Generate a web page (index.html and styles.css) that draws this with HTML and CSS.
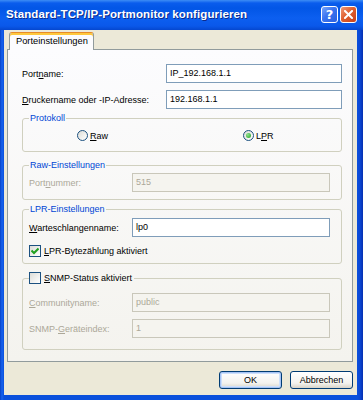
FILE: index.html
```html
<!DOCTYPE html>
<html lang="de">
<head>
    <meta charset="UTF-8">
    <meta name="viewport" content="width=device-width, initial-scale=1.0">
    <title>Standard-TCP/IP-Portmonitor konfigurieren</title>
    <link rel="stylesheet" href="styles.css">
</head>
<body>
    <div class="window">
        <!-- Titelleiste -->
        <div class="titlebar">
            <span class="title">Standard-TCP/IP-Portmonitor konfigurieren</span>
            <div class="caption-buttons">
                <span class="cap-btn help">?</span>
                <span class="cap-btn close">
                    <svg width="9" height="9" viewBox="0 0 9 9"><path d="M1 1 L8 8 M8 1 L1 8" stroke="#fff" stroke-width="2" stroke-linecap="square"/></svg>
                </span>
            </div>
        </div>

        <div class="client">
            <div class="tabs">
                <span class="tab active">Porteinstellungen</span>
            </div>

            <div class="panel">
                <div class="row top">
                    <span>Port<u>n</u>ame:</span>
                    <span class="edit">IP_192.168.1.1</span>
                </div>
                <div class="row top second">
                    <span><u>D</u>ruckername oder -IP-Adresse:</span>
                    <span class="edit">192.168.1.1</span>
                </div>

                <!-- Protokoll -->
                <fieldset class="group protokoll">
                    <legend>Protokoll</legend>
                    <div class="radio-row">
                        <span class="option"><span class="radio"></span><span><u>R</u>aw</span></span>
                        <span class="option"><span class="radio checked"></span><span>L<u>P</u>R</span></span>
                    </div>
                </fieldset>

                <!-- Raw-Einstellungen -->
                <fieldset class="group raw">
                    <legend>Raw-Einstellungen</legend>
                    <div class="row inner disabled">
                        <span>Port<u>n</u>ummer:</span>
                        <span class="edit">515</span>
                    </div>
                </fieldset>

                <!-- LPR-Einstellungen -->
                <fieldset class="group lpr">
                    <legend>LPR-Einstellungen</legend>
                    <div class="row inner">
                        <span><u>W</u>arteschlangenname:</span>
                        <span class="edit">lp0</span>
                    </div>
                    <div class="check-row">
                        <span class="checkbox checked">
                            <svg width="8" height="8" viewBox="0 0 8 8"><path d="M0.5 3.5 L3 6 L7.5 1.5" fill="none" stroke="#21a121" stroke-width="2"/></svg>
                        </span>
                        <span><u>L</u>PR-Bytezählung aktiviert</span>
                    </div>
                </fieldset>

                <!-- SNMP -->
                <fieldset class="group snmp">
                    <legend class="check-legend">
                        <span class="checkbox"></span>
                        <span><u>S</u>NMP-Status aktiviert</span>
                    </legend>
                    <div class="row inner disabled">
                        <span><u>C</u>ommunityname:</span>
                        <span class="edit">public</span>
                    </div>
                    <div class="row inner disabled second">
                        <span>SNMP-<u>G</u>eräteindex:</span>
                        <span class="edit">1</span>
                    </div>
                </fieldset>
            </div>

            <div class="button-row">
                <button class="btn default">OK</button>
                <button class="btn">Abbrechen</button>
            </div>
        </div>
    </div>
</body>
</html>
```

FILE: styles.css
```css
body {
    margin: 0;
    font-family: 'Liberation Sans', Arial, sans-serif;
    font-size: 9px;
    color: #000;
}
.window {
    width: 363px;
    height: 400px;
    display: flex;
    flex-direction: column;
    background: linear-gradient(to right, #0842c6 0, #1763ee 2px, #0a50dc 4px, #0a50dc 357px, #0b47d4 360px, #052fb0 363px);
}
.titlebar {
    height: 30px;
    flex: none;
    display: flex;
    align-items: center;
    justify-content: space-between;
    padding: 0 6px 2px 6px;
    box-sizing: border-box;
    background: linear-gradient(to bottom, #3d8df5 0, #0a5ded 3px, #0256e6 8px, #0c5ff0 18px, #0a58ea 26px, #0547cf 30px);
}
.title {
    font-weight: bold;
    font-size: 11.5px;
    color: #fff;
    text-shadow: 1px 1px 0 #0d2b8c;
    letter-spacing: 0.1px;
}
.caption-buttons {
    display: flex;
    gap: 2px;
    margin-top: 1px;
}
.cap-btn {
    width: 17px;
    height: 17px;
    box-sizing: border-box;
    border: 1px solid #fff;
    border-radius: 3px;
    display: flex;
    align-items: center;
    justify-content: center;
}
.cap-btn.help {
    background: linear-gradient(135deg, #7aa6fb 0, #3a74f0 45%, #2a5fe0 100%);
    color: #fff;
    font-weight: bold;
    font-size: 13px;
    font-family: 'DejaVu Sans', sans-serif;
}
.cap-btn.close {
    background: linear-gradient(135deg, #ef9a7a 0, #e0602f 45%, #c8401a 100%);
}
.client {
    flex: 1;
    margin: 0 6px 5px 4px;
    padding: 2px 4px 0 3px;
    background: #ece9d8;
    display: flex;
    flex-direction: column;
}
.tabs {
    display: flex;
    padding-left: 2px;
    height: 18px;
    margin-bottom: -1px;
    position: relative;
}
.tab {
    height: 18px;
    box-sizing: border-box;
    padding: 0 5px 0 6px;
    border: 1px solid #919b9c;
    border-bottom: none;
    border-top-color: #e68b2c;
    border-radius: 3px 3px 0 0;
    box-shadow: inset 0 2px 0 #ffc83c;
    background: #fcfcfe;
    line-height: 16px;
    font-size: 9.3px;
}
.panel {
    border: 1px solid #919b9c;
    background: linear-gradient(to bottom, #fcfcfe, #f4f3ee);
    padding: 14px 10px 11px 14px;
    display: flex;
    flex-direction: column;
}
.row {
    display: grid;
    align-items: center;
    height: 19px;
}
.row.top {
    grid-template-columns: 144px 1fr;
}
.row.inner {
    grid-template-columns: 103px 1fr;
}
.row.second {
    margin-top: 7px;
}
.edit {
    height: 19px;
    box-sizing: border-box;
    border: 1px solid #7f9db9;
    background: #fff;
    padding: 0 3px;
    line-height: 17px;
    white-space: nowrap;
}
.disabled {
    color: #aca899;
}
.disabled .edit {
    border-color: #c9c7ba;
    background: #f5f4ef;
}
u {
    text-underline-offset: 1px;
}
.group {
    margin: 4px 0 0;
    padding: 0 11px 7px 6px;
    border: 1px solid #d0d0bf;
    border-radius: 3px;
    min-width: 0;
}
.group legend {
    padding: 0 1px;
    line-height: 11px;
    color: #0046d5;
}
.group.protokoll {
    padding-top: 5px;
    padding-bottom: 9px;
}
.group.raw {
    margin-top: 8px;
    padding-top: 2px;
}
.group.lpr {
    padding-top: 3px;
    padding-bottom: 6px;
}
.group.snmp {
    margin-top: 8px;
    padding-top: 9px;
    padding-bottom: 11px;
}
.radio-row {
    display: grid;
    grid-template-columns: 166px auto;
    padding-left: 48px;
    height: 13px;
    align-items: center;
}
.option {
    display: flex;
    align-items: center;
    gap: 2px;
}
.radio {
    width: 11px;
    height: 11px;
    box-sizing: border-box;
    border: 1px solid #1c5180;
    border-radius: 50%;
    background: linear-gradient(135deg, #dcdcd7, #ffffff);
    display: flex;
    align-items: center;
    justify-content: center;
}
.radio.checked::after {
    content: '';
    width: 5px;
    height: 5px;
    border-radius: 50%;
    background: radial-gradient(circle at 35% 35%, #8ee28e, #21a121);
}
.check-row {
    display: flex;
    align-items: center;
    gap: 3px;
    height: 12px;
    margin-top: 8px;
}
.checkbox {
    width: 12px;
    height: 12px;
    box-sizing: border-box;
    border: 1px solid #1c5180;
    background: linear-gradient(135deg, #dcdcd7, #ffffff);
    display: flex;
    align-items: center;
    justify-content: center;
}
.group legend.check-legend {
    display: flex;
    align-items: center;
    gap: 3px;
    height: 12px;
    padding: 0 2px 0 0;
    color: #000;
}
.button-row {
    display: flex;
    justify-content: flex-end;
    gap: 8px;
    margin-top: 9px;
}
.btn {
    width: 63px;
    height: 18px;
    padding: 0;
    border: 1px solid #003c74;
    border-radius: 3px;
    background: linear-gradient(to bottom, #ffffff, #f3f2ee 70%, #d8d3c8);
    font-family: 'Liberation Sans', Arial, sans-serif;
    font-size: 9px;
    color: #000;
}
.btn.default {
    box-shadow: inset 0 0 0 1px #a6c3f5, inset 0 0 0 2px #cde0fb;
}
```
